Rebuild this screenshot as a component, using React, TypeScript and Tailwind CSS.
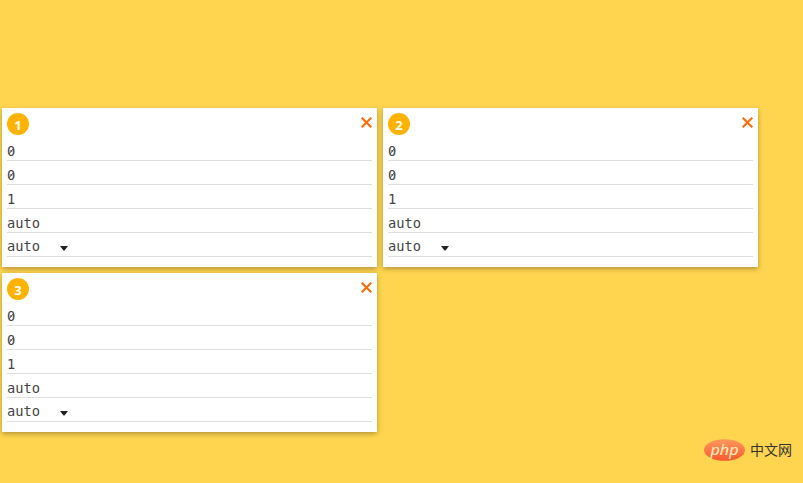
import React, { useState } from "react";

type FlexItem = {
  id: number;
  order: string;
  flexGrow: string;
  flexShrink: string;
  flexBasis: string;
  alignSelf: string;
};

const initialItems: FlexItem[] = [1, 2, 3].map((id) => ({
  id,
  order: "0",
  flexGrow: "0",
  flexShrink: "1",
  flexBasis: "auto",
  alignSelf: "auto",
}));

const Field = ({ value }: { value: string }) => (
  <div className="h-6 border-b border-[#dddddd] pt-[5px] leading-[18px]">
    <span className="relative">
      {value}
      {/* slashed zero */}
      {value === "0" && (
        <svg className="absolute left-0 top-[3px]" width="8" height="11" viewBox="0 0 8 11" stroke="#555555">
          <path d="M2 8L6 3" />
        </svg>
      )}
    </span>
  </div>
);

const ItemCard = ({ item, onRemove }: { item: FlexItem; onRemove: () => void }) => (
  <div className="h-[159px] w-[375px] bg-white px-[5px] pt-[5px] shadow-[0_2px_5px_rgba(0,0,0,0.3)]">
    <div className="flex h-6 items-start justify-between">
      <span className="flex h-[22px] w-[22px] items-center justify-center rounded-full bg-[#ffb300] pt-[3px] font-['Open_Sans',sans-serif] text-[13px] font-bold leading-none text-white">
        {item.id}
      </span>
      <button onClick={onRemove} className="mt-[3.5px] cursor-pointer" aria-label="Remove">
        <svg width="11" height="11" viewBox="0 0 11 11" fill="none" stroke="#ff6d0a" strokeWidth="2.1">
          <path d="M0.7 0.7L10.3 10.3M10.3 0.7L0.7 10.3" />
        </svg>
      </button>
    </div>
    <Field value={item.order} />
    <Field value={item.flexGrow} />
    <Field value={item.flexShrink} />
    <Field value={item.flexBasis} />
    <div className="flex h-6 items-start border-b border-[#dddddd] pt-1 leading-[18px]">
      <span>{item.alignSelf}</span>
      <svg className="ml-5 mt-[9px]" width="8" height="5" viewBox="0 0 8 5" fill="#222222">
        <path d="M0 0H8L4.5 4.5H3.5Z" />
      </svg>
    </div>
  </div>
);

const SiteLogo = () => (
  <div className="flex items-center gap-[5px]">
    <svg className="overflow-visible" width="42" height="22" viewBox="0 0 42 22">
      <defs>
        <linearGradient id="logoFill" x1="0" y1="0" x2="0" y2="1">
          <stop offset="0" stopColor="#ff9a5c" />
          <stop offset="1" stopColor="#f9582f" />
        </linearGradient>
      </defs>
      <ellipse cx="21.5" cy="11" rx="20.5" ry="10.8" fill="url(#logoFill)" />
      <text
        x="21.5"
        y="15.5"
        textAnchor="middle"
        textLength="28"
        lengthAdjust="spacingAndGlyphs"
        fill="#ffedc0"
        stroke="#ffedc0"
        strokeWidth="0.2"
        className="font-['Open_Sans',sans-serif] text-[15px] italic leading-4"
      >
        php
      </text>
    </svg>
    <span className="-mt-0.5 font-['Noto_Sans_CJK_SC',sans-serif] text-[14px] leading-5 text-[#333333]">中文网</span>
  </div>
);

const App = () => {
  const [items, setItems] = useState<FlexItem[]>(initialItems);

  const removeItem = (id: number) => {
    setItems((prev) => prev.filter((item) => item.id !== id));
  };

  return (
    <div className="flex h-[483px] w-[803px] flex-col overflow-hidden bg-[#ffd54f] pl-0.5 pt-[108px] font-['DejaVu_Sans_Mono',monospace] text-[13.7px] text-[#444444]">
      <div className="flex flex-wrap gap-1.5">
        {items.map((item) => (
          <ItemCard key={item.id} item={item} onRemove={() => removeItem(item.id)} />
        ))}
      </div>
      <div className="mt-auto flex justify-end pb-[22px] pr-[11px]">
        <SiteLogo />
      </div>
    </div>
  );
};

export default App;
